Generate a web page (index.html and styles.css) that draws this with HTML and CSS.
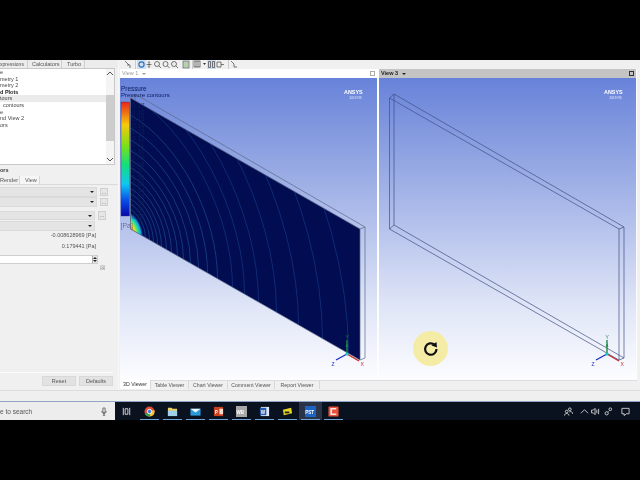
FILE: index.html
```html
<!DOCTYPE html>
<html lang="en">
<head>
<meta charset="utf-8">
<title>CFD-Post</title>
<link rel="stylesheet" href="styles.css">
</head>
<body>
<div class="letterbox"></div>
<div class="app">
  <div class="work">
    <aside class="side">
      <div class="side-tabs">
        <span class="stab w-exp">xpressions</span><span class="stab w-calc">Calculators</span><span class="stab w-turbo">Turbo</span>
      </div>
      <div class="tree">
        <ul class="tree-list">
          <li>e</li>
          <li>metry 1</li>
          <li>metry 2</li>
          <li class="strong">d Plots</li>
          <li class="hl">tours</li>
          <li class="ind">contours</li>
          <li>e</li>
          <li>nd View 2</li>
          <li>ors</li>
        </ul>
        <div class="vscroll">
          <svg class="arrow" viewBox="0 0 8 5"><path d="M1 4l3-3 3 3" /></svg>
          <div class="thumb"></div>
          <svg class="arrow" viewBox="0 0 8 5"><path d="M1 1l3 3 3-3" /></svg>
        </div>
      </div>
      <div class="sec-title">ors</div>
      <div class="form-tabs"><span class="ftab w-render">Render</span><span class="ftab w-view active">View</span></div>
      <div class="form">
        <div class="row"><div class="select"><i></i></div><div class="dots">...</div></div>
        <div class="row"><div class="select"><i></i></div><div class="dots">...</div></div>
        <div class="row r2 gap-top"><div class="select"><i></i></div><div class="dots">...</div></div>
        <div class="row r2"><div class="select"><i></i></div></div>
        <div class="value v1">-0.008628969 [Pa]</div>
        <div class="value v2">0.179441 [Pa]</div>
        <div class="spin"><span class="spin-btn"></span></div>
        <div class="xmark">&#9746;</div>
      </div>
      <div class="side-foot">
        <button class="btn b-reset">Reset</button><button class="btn b-def">Defaults</button>
      </div>
    </aside>
    <main class="main">
      <div class="toolbar">
        <svg class="tb-svg" viewBox="124 60 120 9">
          <g class="tb-ic">
            <path d="M125 61l4 4M127 65h3v3" />
            <rect class="tb-on" x="137" y="60" width="9" height="9"/>
            <circle cx="141.500" cy="64.500" r="2.600" class="ic-blue"/>
            <path d="M149 62v5M146.500 64.500h5M148 62.500l1-1 1 1M148 66.500l1 1 1-1" />
            <circle cx="157" cy="64" r="2.500"/><path d="M159 66l2 2"/>
            <circle cx="165.500" cy="64" r="2.500"/><path d="M167.500 66l2 2"/>
            <circle cx="174" cy="64" r="2.500"/><path d="M176 66l2 2"/>
            <rect x="183" y="61" width="6" height="7" class="ic-green"/>
            <rect x="194" y="61" width="6" height="6"/><path d="M196 61v6M198 61v6"/>
            <path d="M203 63h3l-1.500 2z" class="ic-fill"/>
            <rect class="tb-on" x="207" y="60" width="9" height="9"/>
            <path d="M208.500 61.500h2v6h-2zM212.500 61.500h2v6h-2z"/>
            <path d="M217 62h4v5h-4zM221 64.500h3"/>
            <path d="M231 61l3 3v3M234 67h3"/>
          </g>
          <path class="tb-sep" d="M135.500 60v9M192.500 60v9M228.500 60v9"/>
        </svg>
      </div>
      <div class="views">
        <section class="view">
          <header class="view-head"><span class="vh-title">View 1</span><span class="vh-caret"></span><span class="vh-max"></span></header>
          <div class="canvas">
            <svg class="scene" viewBox="120 78 257 302">
              <defs>
                <linearGradient id="rainbow" x1="0" y1="0" x2="0" y2="1">
                  <stop offset="0" stop-color="#e8261a"/><stop offset=".2" stop-color="#f7c90c"/><stop offset=".38" stop-color="#7fe015"/>
                  <stop offset=".55" stop-color="#12e07a"/><stop offset=".72" stop-color="#0fc8f0"/><stop offset=".86" stop-color="#0a50e8"/><stop offset="1" stop-color="#0606a8"/>
                </linearGradient>
                <radialGradient id="spot">
                  <stop offset="0" stop-color="#ff7a10"/><stop offset=".3" stop-color="#f5e010"/><stop offset=".55" stop-color="#30e890"/><stop offset=".8" stop-color="#10a0e0"/><stop offset="1" stop-color="#0a2a90" stop-opacity="0"/>
                </radialGradient>
                <clipPath id="panel"><rect x="0" y="0" width="229.500" height="100"/></clipPath>
              </defs>
              <polygon class="face" points="130.500,98 360,229 360,360 130.500,229"/>
              <g transform="matrix(1 .57 0 -1.31 130.500 229)" clip-path="url(#panel)">
                <circle class="spot" r="13" cx="0" cy="0"/>
                <g class="iso">
                  <circle r="15"/><circle r="19"/><circle r="23"/><circle r="27"/><circle r="31"/><circle r="36"/><circle r="41"/><circle r="47"/><circle r="53"/><circle r="60"/><circle r="68"/><circle r="77"/><circle r="87"/>
                </g>
                <g class="iso far">
                  <circle r="102"/><circle r="114"/><circle r="128"/><circle r="146"/><circle r="168"/><circle r="192"/><circle r="218"/>
                </g>
              </g>
              <g class="wire gray">
                <path d="M130.500 98L135 94L365 227V358L360 360M360 229L365 227M135 94V100"/>
                <path d="M130.500 98L360 229V360L130.500 229V98"/>
              </g>
              <rect class="legend" x="121" y="102" width="8.500" height="114"/>
              <text class="t-title" x="121" y="91">Pressure</text>
              <text class="t-sub" x="121" y="97">Pressure contours</text>
              <g class="t-nums">
                <text x="132" y="108">0.17</text><text x="132" y="114.500">0.16</text><text x="132" y="121">0.15</text><text x="132" y="127.500">0.14</text><text x="132" y="134">0.13</text><text x="132" y="140.500">0.12</text><text x="132" y="147">0.11</text><text x="132" y="153.500">0.10</text><text x="132" y="160">0.09</text><text x="132" y="166.500">0.08</text><text x="132" y="173">0.07</text><text x="132" y="179.500">0.06</text><text x="132" y="186">0.05</text><text x="132" y="192.500">0.04</text><text x="132" y="199">0.03</text><text x="132" y="205.500">0.02</text><text x="132" y="212">0.01</text><text x="132" y="218.500">0.00</text>
              </g>
              <text class="t-unit" x="120.500" y="228">[Pa]</text>
              <text class="t-ansys" x="344" y="94">ANSYS</text>
              <text class="t-ver" x="349.500" y="98.500">2019 R3</text>
              <g class="axes">
                <path class="ax-y" d="M347 354V340"/><path class="ax-y-h" d="M347 343.500l-1.500 3h3z"/>
                <path class="ax-x" d="M347 354L359 361"/>
                <path class="ax-z" d="M347 354L336 360"/>
                <circle class="ax-o" cx="347" cy="354" r="1.600"/>
                <text class="l-y" x="345.500" y="339">Y</text><text class="l-x" x="360.500" y="365.500">X</text><text class="l-z" x="331.500" y="366">Z</text>
              </g>
            </svg>
          </div>
        </section>
        <section class="view">
          <header class="view-head sel"><span class="vh-title">View 3</span><span class="vh-caret"></span><span class="vh-max"></span></header>
          <div class="canvas">
            <svg class="scene" viewBox="379 78 257 302">
              <g class="wire navy">
                <path d="M389.500 98L394 94L624 227V358L619 360M619 229L624 227M394 94V225L389.500 229M394 225L624 358"/>
                <path d="M389.500 98L619 229V360L389.500 229V98"/>
              </g>
              <text class="t-ansys" x="604" y="94">ANSYS</text>
              <text class="t-ver" x="609.500" y="98.500">2019 R3</text>
              <g class="axes">
                <path class="ax-y" d="M607 354V340"/><path class="ax-y-h" d="M607 343.500l-1.500 3h3z"/>
                <path class="ax-x" d="M607 354L619 361"/>
                <path class="ax-z" d="M607 354L596 360"/>
                <circle class="ax-o" cx="607" cy="354" r="1.600"/>
                <text class="l-y" x="605.500" y="339">Y</text><text class="l-x" x="620.500" y="365.500">X</text><text class="l-z" x="591.500" y="366">Z</text>
              </g>
            </svg>
            <div class="reload">
              <svg viewBox="0 0 20 20"><path class="reload-arc" d="M15.500 10a5.700 5.700 0 1 1-2-4.300"/><path class="reload-head" d="M10.500 6.500l5-3.500.5 5.500z"/></svg>
            </div>
          </div>
        </section>
      </div>
      <div class="view-tabs">
        <span class="vtab on t1">3D Viewer</span><span class="vtab t2">Table Viewer</span><span class="vtab t3">Chart Viewer</span><span class="vtab t4">Comment Viewer</span><span class="vtab t5">Report Viewer</span>
      </div>
    </main>
  </div>
  <div class="status"></div>
</div>
<footer class="taskbar">
  <div class="search"><span class="search-text">e to search</span>
    <svg class="mic" viewBox="0 0 8 11"><rect x="2.500" y="0.500" width="3" height="6.500" rx="1.500"/><path d="M1 5c0 4 6 4 6 0M4 8v2.500M2.500 10.500h3"/></svg>
  </div>
  <div class="tasks">
    <div class="task plain"><svg viewBox="0 0 12 12"><path class="line" d="M2.500 2v8M9.500 2v8M4.500 3h3v6h-3z"/></svg></div>
    <div class="task open"><svg viewBox="0 0 12 12"><circle cx="6" cy="6" r="5.500" fill="#dd4b39"/><path d="M6 6L1 9a5.500 5.500 0 0 0 6 2.500z" fill="#2da84f"/><path d="M6 6l5.200-1.600A5.500 5.500 0 0 1 7 11.500z" fill="#f7c52b"/><circle cx="6" cy="6" r="2.400" fill="#3b78e7" stroke="#fff"/></svg></div>
    <div class="task open"><svg viewBox="0 0 12 12"><path d="M1 2h4l1 1h5v8H1z" fill="#f0d060"/><path d="M1 5h10v6H1z" fill="#9fd0e8"/></svg></div>
    <div class="task open"><svg viewBox="0 0 12 12"><path d="M0.500 3h11v7.500h-11z" fill="#2a9ad8"/><path d="M0.500 3L6 7l5.500-4z" fill="#f2f6fa"/></svg></div>
    <div class="task open"><svg viewBox="0 0 12 12"><rect x="1" y="1" width="10" height="10" fill="#c8401f"/><rect x="7" y="3" width="4" height="6" fill="#f4d8cc"/><text class="ic-t" x="2" y="8.500">P</text></svg></div>
    <div class="task open"><svg viewBox="0 0 12 12"><rect x="0" y="0" width="12" height="12" fill="#a8a8a8"/><text class="ic-t" x="0.500" y="8.500">WB</text></svg></div>
    <div class="task open"><svg viewBox="0 0 12 12"><rect x="2" y="1" width="9" height="10" fill="#dfe8f8"/><rect x="1" y="2" width="7" height="8" fill="#2a5cae"/><text class="ic-t" x="2" y="8.500">W</text></svg></div>
    <div class="task open"><svg viewBox="0 0 12 12"><path d="M1 4l9-2 1 6-9 2z" fill="#e8d820"/><path d="M3 6h5v2H3z" fill="#222"/></svg></div>
    <div class="task open active"><svg viewBox="0 0 12 12"><rect x="0" y="0" width="12" height="12" fill="#1c63c4"/><text class="ic-t" x="0.300" y="8.500">PST</text></svg></div>
    <div class="task open"><svg viewBox="0 0 12 12"><rect x="0.500" y="0.500" width="11" height="11" rx="1" fill="#e8503a"/><path d="M9 3H3.500v6H9" fill="none" stroke="#fbe8e0" stroke-width="1.800"/></svg></div>
  </div>
  <div class="tray">
    <svg class="tray-i i-people" viewBox="0 0 10 10"><circle cx="6.500" cy="2.500" r="1.500"/><circle cx="3" cy="5" r="1.500"/><path d="M0.500 9.500c0-3 5-3 5 0M6 5.500c2-1 3.500 0 3.500 2"/></svg>
    <svg class="tray-i i-caret" viewBox="0 0 10 10"><path d="M1 7l4-4 4 4"/></svg>
    <svg class="tray-i i-sound" viewBox="0 0 10 10"><path d="M0.500 3.500h2l2-2v7l-2-2h-2zM6.500 3v4M8.500 2v6"/></svg>
    <svg class="tray-i i-net" viewBox="0 0 10 10"><circle cx="7" cy="2.500" r="1.500"/><circle cx="3" cy="7" r="1.800"/><path d="M5 5l1-1"/></svg>
    <svg class="tray-i i-note" viewBox="0 0 10 10"><path d="M1 1.500h8v6H6L3.500 9.500V7.500H1z"/></svg>
  </div>
</footer>
<div class="letterbox"></div>
</body>
</html>
```
FILE: styles.css
```css
* { box-sizing: border-box; }
html, body { margin: 0; padding: 0; }
body {
  width: 640px;
  height: 480px;
  overflow: hidden;
  background: #000;
  display: flex;
  flex-direction: column;
  font-family: "Liberation Sans", Arial, sans-serif;
  font-size: 5.5px;
  color: #555;
}
.letterbox { height: 60px; flex: none; background: #000; }
.app { height: 342px; flex: none; background: #f0f0f0; display: flex; flex-direction: column; border-bottom: 1px solid #8fa4c4; filter: blur(.35px); }
.work { height: 330px; flex: none; display: flex; }
.status { flex: 1; background: #efefef; border-top: 1px solid #dcdcdc; }

/* left panel */
.side { width: 119px; flex: none; display: flex; flex-direction: column; background: #f0f0f0; border-right: 1px solid #f7f7f7; }
.side-tabs { height: 8px; flex: none; display: flex; font-size: 5.5px; line-height: 8px; background: #ececec; }
.stab { padding-left: 4px; border-right: 1px solid #cfcfcf; white-space: nowrap; overflow: hidden; }
.w-exp { width: 28px; padding-left: 0; font-size: 5px; }
.w-calc { width: 34px; }
.w-turbo { width: 23px; padding-left: 5px; }
.tree { height: 97px; width: 115px; flex: none; display: flex; background: #fff; border: 1px solid #c8c8c8; border-left: 0; }
.tree-list { flex: 1; list-style: none; margin: 0; padding: 0; line-height: 6.6px; color: #444; }
.tree-list li { height: 6.6px; white-space: nowrap; }
.tree-list li.strong { font-weight: 700; color: #222; }
.tree-list li.hl { background: #ebebeb; margin-right: -1px; }
.tree-list li.ind { padding-left: 3px; }
.vscroll { width: 8px; flex: none; display: flex; flex-direction: column; justify-content: space-between; background: #f4f4f4; padding: 2px 0; }
.arrow { width: 8px; height: 5px; display: block; }
.arrow path { fill: none; stroke: #555; stroke-width: 1; }
.thumb { height: 46px; background: #cdcdcd; margin-top: 18px; margin-bottom: 15px; }
.sec-title { height: 11px; line-height: 11px; font-weight: 700; color: #333; flex: none; }
.form-tabs { height: 8px; flex: none; display: flex; line-height: 8px; color: #555; }
.ftab { display: block; border-right: 1px solid #d8d8d8; }
.w-render { width: 20px; }
.w-view { width: 20px; padding-left: 5px; background: #f6f6f6; }
.form { height: 188px; flex: none; border-top: 1px solid #dadada; padding-top: 2px; display: flex; flex-direction: column; }
.row { height: 10px; flex: none; display: flex; align-items: center; gap: 3px; }
.row.gap-top { margin-top: 3px; }
.row.r2 { height: 10.500px; }
.select { width: 97px; height: 9.500px; background: #e4e4e4; border: 1px solid #dadada; border-left: 0; position: relative; }
.r2 .select { width: 95px; }
.select i { position: absolute; right: 2px; top: 3px; border: 2px solid transparent; border-top: 2px solid #222; border-bottom: 0; }
.dots { width: 8px; height: 8.500px; text-align: center; line-height: 6px; background: #e6e6e6; border: 1px solid #cfcfcf; color: #555; }
.value { text-align: right; width: 96px; flex: none; color: #555; height: 6px; line-height: 6px; }
.v1 { margin-top: 1px; }
.v2 { margin-top: 5px; }
.spin { width: 98px; height: 9px; flex: none; margin-top: 6px; background: #fff; border: 1px solid #cfcfcf; border-left: 0; position: relative; }
.spin-btn { position: absolute; right: 0; top: 0; bottom: 0; width: 5px; background: #e6e6e6; border-left: 1px solid #aaa; }
.spin-btn::before, .spin-btn::after { content: ""; position: absolute; left: 0; border: 2px solid transparent; }
.spin-btn::before { top: -1px; border-bottom-color: #222; }
.spin-btn::after { bottom: -1px; border-top-color: #222; }
.xmark { margin: 1px 0 0 100px; width: 7px; font-size: 6px; line-height: 7px; color: #777; }
.side-foot { height: 17px; flex: none; width: 113px; border-top: 1px solid #fbfbfb; display: flex; justify-content: flex-end; gap: 3px; padding-top: 3px; }
.btn { width: 34px; height: 10px; padding: 0; margin: 0; border: 1px solid #d8d8d8; background: #e2e2e2; color: #555; font: 5.5px/8px "Liberation Sans", Arial, sans-serif; text-align: center; }

/* main */
.main { flex: 1; min-width: 0; display: flex; flex-direction: column; padding-left: 1px; padding-right: 3px; }
.toolbar { height: 9px; flex: none; background: #f0f0f0; }
.tb-svg { display: block; width: 120px; height: 9px; margin-left: 4px; }
.tb-ic path, .tb-ic rect, .tb-ic circle { fill: none; stroke: #444; stroke-width: .7; }
.tb-ic .tb-on { fill: #cfdff0; stroke: none; }
.tb-ic .ic-blue { stroke: #2a70b8; stroke-width: 1.100; }
.tb-ic .ic-green { fill: #b8d0b0; stroke: #667; }
.tb-ic .ic-fill { fill: #333; stroke: none; }
.tb-sep { stroke: #ccc; stroke-width: 1; fill: none; }
.views { height: 311px; flex: none; display: grid; grid-template-columns: 257px 257px; gap: 2px; background: #fdfdfd; }
.view { display: flex; flex-direction: column; min-width: 0; }
.view-head { height: 9px; flex: none; display: flex; align-items: center; gap: 3px; background: #fff; padding: 0 2px; color: #999; line-height: 9px; }
.view-head.sel { background: #c4c4c4; color: #222; font-weight: 700; }
.vh-caret { border: 2px solid transparent; border-top: 2px solid currentColor; border-bottom: 0; margin-left: 1px; }
.vh-max { width: 5px; height: 5px; border: 1px solid #aaa; margin-left: auto; }
.sel .vh-max { border-color: #333; }
.canvas { flex: 1; position: relative; background: linear-gradient(180deg, #6782da 0%, #7f96de 15%, #b6c3ec 50%, #dfe5f7 75%, #fdfdff 100%); }
.scene { display: block; width: 257px; height: 302px; }
.face { fill: #020c50; }
.spot { fill: url(#spot); }
.iso circle { fill: none; stroke: #2f78c0; stroke-width: .55; vector-effect: non-scaling-stroke; opacity: .75; }
.iso.far circle { stroke: #1f55a8; opacity: .8; }
.wire path { fill: none; stroke-width: .7; }
.wire.gray path { stroke: #5a6788; }
.wire.navy path { stroke: #3f4e84; }
.legend { fill: url(#rainbow); stroke: #3a3a70; stroke-width: .4; }
.t-title { font-size: 6.400px; fill: #0d1d5e; }
.t-sub { font-size: 6px; fill: #0d1d5e; }
.t-nums text { font-size: 6.500px; fill: #13275e; opacity: .75; }
.t-unit { font-size: 7px; fill: #6a7290; }
.t-ansys { font-size: 5.400px; font-weight: 700; fill: #fff; }
.t-ver { font-size: 3.200px; fill: #e8edff; }
.ax-y, .ax-x, .ax-z { fill: none; stroke-width: 1.400; }
.ax-y { stroke: #1c8a44; }
.ax-y-h { fill: #1c8a44; }
.ax-x { stroke: #c02a2a; }
.ax-z { stroke: #1a2ec0; }
.ax-o { fill: #18c8c8; }
.axes text { font-size: 5px; }
.l-y { fill: #1c8a44; }
.l-x { fill: #c02a2a; }
.l-z { fill: #1a2ec0; }
.reload { position: absolute; left: 34px; top: 253px; width: 35px; height: 35px; border-radius: 50%; background: radial-gradient(circle, #f5edaa 0%, #f4eca4 65%, #f7f1bc 100%); display: flex; align-items: center; justify-content: center; }
.reload svg { width: 20px; height: 20px; display: block; }
.reload-arc { fill: none; stroke: #111; stroke-width: 2.200; }
.reload-head { fill: #111; }
.view-tabs { height: 10px; flex: none; display: flex; background: #f0f0f0; border-top: 1px solid #dcdcdc; line-height: 8px; color: #555; font-size: 5.200px; }
.vtab { display: block; text-align: center; height: 8px; border-right: 1px solid #d8d8d8; white-space: nowrap; }
.vtab.on { background: #fff; color: #333; margin-top: -1px; height: 9px; }
.t1 { width: 31px; }
.t2 { width: 38px; }
.t3 { width: 39px; }
.t4 { width: 47px; }
.t5 { width: 45px; }

/* taskbar */
.taskbar { height: 18px; flex: none; display: flex; background: #0a1220; filter: blur(.3px); }
.search { width: 115px; flex: none; display: flex; align-items: center; justify-content: space-between; background: #ededed; padding-right: 8px; font-size: 6.500px; color: #555; }
.search-text { white-space: nowrap; }
.mic { width: 6px; height: 9px; display: block; }
.mic rect, .mic path { fill: none; stroke: #444; stroke-width: 1; }
.tasks { display: flex; }
.task { width: 23px; height: 18px; flex: none; display: flex; align-items: center; justify-content: center; position: relative; }
.task svg { width: 11px; height: 11px; display: block; }
.task.open::after { content: ""; position: absolute; left: 2px; right: 2px; bottom: 0; height: 1px; background: #6fa4d8; }
.task.active { background: #2a3446; }
.task .line { fill: none; stroke: #ddd; stroke-width: 1; }
.ic-t { font-size: 5px; font-weight: 700; fill: #fff; }
.tray { flex: 1; display: flex; align-items: center; padding-left: 219px; }
.tray-i { width: 9px; height: 9px; display: block; fill: none; stroke: #e8e8e8; stroke-width: .9; flex: none; }
.i-caret { margin-left: 7px; }
.i-sound { margin-left: 2px; }
.i-net { margin-left: 4px; }
.i-note { margin-left: 8px; }
```
